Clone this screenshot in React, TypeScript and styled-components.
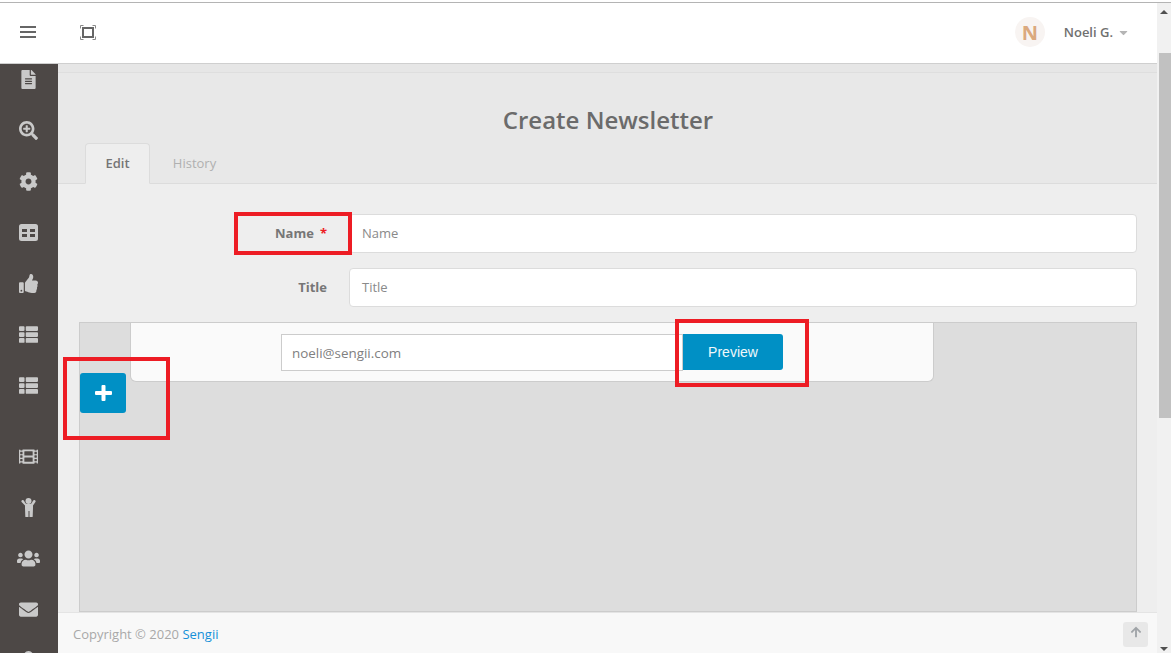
import React from "react";
import styled, { createGlobalStyle } from "styled-components";
import {
  FaFileAlt,
  FaSearchPlus,
  FaCog,
  FaThumbsUp,
  FaThList,
  FaFilm,
  FaUsers,
  FaEnvelope,
  FaArrowUp,
  FaCaretDown,
  FaUser,
} from "react-icons/fa";

const Global = createGlobalStyle`
  html, body { margin: 0; padding: 0; width: 100%; height: 100%; overflow: hidden; background: #fff; }
  * { box-sizing: border-box; }
  body { font-family: "Open Sans", "Liberation Sans", sans-serif; }
`;

const Page = styled.div`
  position: relative;
  width: 1171px;
  height: 653px;
  overflow: hidden;
  display: flex;
  flex-direction: column;
`;
const TopLine = styled.div`
  height: 3px;
  flex: none;
  background: #fff;
  border-bottom: 1px solid #b4b4b4;
`;
const Body = styled.div`
  flex: 1;
  min-height: 0;
  display: flex;
`;
const Left = styled.div`
  flex: 1;
  min-width: 0;
  display: flex;
  flex-direction: column;
`;
const Header = styled.header`
  flex: none;
  height: 61px;
  background: #fff;
  border-bottom: 1px solid #cfcfcf;
  display: flex;
  align-items: center;
  padding: 0 27px 2px 20px;
`;
const Burger = styled.div`
  width: 16px;
  display: flex;
  flex-direction: column;
  gap: 3px;
  margin-right: 44px;
  span { display: block; height: 2px; background: #666; }
`;
const Spacer = styled.div`
  flex: 1;
`;
const Avatar = styled.div`
  width: 30px;
  height: 30px;
  border-radius: 50%;
  background: #f8f4f2;
  color: #dba97e;
  font-weight: 700;
  font-size: 20px;
  display: flex;
  align-items: center;
  justify-content: center;
  margin-right: 19px;
`;
const UserName = styled.span`
  font-size: 13px;
  font-weight: 600;
  color: #707070;
  margin-right: 4px;
`;
const Caret = styled.span`
  display: flex;
  color: #b5b5b5;
  font-size: 13px;
`;
const Row = styled.div`
  flex: 1;
  min-height: 0;
  display: flex;
`;
const Sidebar = styled.nav`
  flex: none;
  width: 58px;
  background: #4d4846;
  overflow: hidden;
  display: flex;
  flex-direction: column;
`;
const SideList = styled.div`
  margin-top: -10px;
  padding-right: 2px;
  display: flex;
  flex-direction: column;
`;
const SideItem = styled.div<{ $gap?: boolean; $size?: number }>`
  flex: none;
  height: 51px;
  margin-top: ${(p) => (p.$gap ? "20px" : "0")};
  display: flex;
  align-items: center;
  justify-content: center;
  color: #c9c9c9;
  font-size: ${(p) => p.$size ?? 19}px;
`;
const MainCol = styled.div`
  flex: 1;
  min-width: 0;
  display: flex;
  flex-direction: column;
`;
const Main = styled.main`
  flex: 1;
  min-height: 0;
  overflow: hidden;
  background: #eeeeee;
  display: flex;
  flex-direction: column;
`;
const Band = styled.div`
  flex: none;
  height: 9px;
  background: #e6e6e6;
  border-bottom: 1px solid #dedede;
`;
const TitleArea = styled.div`
  flex: none;
  height: 111px;
  background: #e8e8e8;
  border-bottom: 1px solid #dcdcdc;
  display: flex;
  flex-direction: column;
  justify-content: flex-end;
`;
const Title = styled.h1`
  margin: 0 0 7px 1px;
  text-align: center;
  font-size: 24px;
  line-height: 33px;
  font-weight: 600;
  color: #6b6b6b;
`;
const Tabs = styled.div`
  display: flex;
  padding-left: 27px;
  height: 41px;
  margin-bottom: -1px;
`;
const Tab = styled.div<{ $active?: boolean }>`
  width: ${(p) => (p.$active ? "65px" : "89px")};
  height: 41px;
  padding-bottom: 2px;
  display: flex;
  align-items: center;
  justify-content: center;
  font-size: 13px;
  font-weight: ${(p) => (p.$active ? 600 : 400)};
  color: ${(p) => (p.$active ? "#757575" : "#b0b0b0")};
  background: ${(p) => (p.$active ? "#eeeeee" : "transparent")};
  border: ${(p) => (p.$active ? "1px solid #dcdcdc" : "none")};
  border-bottom: ${(p) => (p.$active ? "1px solid #eeeeee" : "none")};
  border-radius: 4px 4px 0 0;
`;
const Form = styled.div`
  flex: 1;
  min-height: 0;
  display: flex;
  flex-direction: column;
  padding: 30px 20px 0 21px;
`;
const FormRow = styled.div`
  flex: none;
  display: flex;
  align-items: center;
  height: 39px;
  margin-bottom: 15px;
`;
const Label = styled.label`
  width: 270px;
  flex: none;
  text-align: right;
  padding: 0 22px 2px 0;
  font-size: 13px;
  font-weight: 700;
  color: #767676;
`;
const Req = styled.span`
  color: #ed1c24;
  margin-left: 6px;
`;
const TextBox = styled.div`
  flex: 1;
  height: 39px;
  background: #fff;
  border: 1px solid #dcdcdc;
  border-radius: 4px;
  padding: 0 0 2px 12px;
  display: flex;
  align-items: center;
  font-size: 13px;
  color: #8a8a8a;
`;
const Editor = styled.div`
  flex: 1;
  min-height: 0;
  background: #dddddd;
  border: 1px solid #cccccc;
  display: flex;
  align-items: flex-start;
`;
const PlusButton = styled.div`
  flex: none;
  width: 46px;
  height: 40px;
  margin-top: 50px;
  background: #0090c5;
  border-radius: 3px;
  display: flex;
  align-items: center;
  justify-content: center;
`;
const ToolCard = styled.div`
  flex: none;
  width: 804px;
  height: 59px;
  margin-left: 4px;
  background: #fafafa;
  border: 1px solid #cccccc;
  border-top: none;
  border-radius: 0 0 6px 6px;
  padding: 11px 0 0 150px;
  display: flex;
  align-items: flex-start;
`;
const EmailBox = styled.div`
  width: 402px;
  height: 37px;
  background: #fff;
  border: 1px solid #cccccc;
  padding-left: 10px;
  display: flex;
  align-items: center;
  font-size: 13.4px;
  color: #808080;
`;
const PreviewButton = styled.div`
  width: 100px;
  height: 36px;
  background: #0090c5;
  border-radius: 0 3px 3px 0;
  color: #f0f8fb;
  font-family: "Liberation Sans", Arial, sans-serif;
  font-size: 14px;
  display: flex;
  align-items: center;
  justify-content: center;
`;
const Footer = styled.footer`
  flex: none;
  height: 41px;
  background: #f8f8f8;
  border-top: 1px solid #e4e4e4;
  display: flex;
  align-items: center;
  justify-content: space-between;
  padding: 2px 9px 0 15px;
  font-size: 13px;
  color: #a8a8a8;
`;
const Link = styled.a`
  color: #1590d8;
  text-decoration: none;
`;
const ToTop = styled.div`
  width: 25px;
  height: 25px;
  margin-top: 1px;
  border-radius: 3px;
  background: #e8e8e8;
  color: #a0a4a8;
  font-size: 12px;
  display: flex;
  align-items: center;
  justify-content: center;
  padding-bottom: 5px;
`;
const Scrollbar = styled.div`
  flex: none;
  width: 14px;
  background: #f1f1f1;
  display: flex;
  flex-direction: column;
  align-items: flex-end;
  position: relative;
`;
const ArrowUp = styled.div`
  width: 0;
  height: 0;
  position: absolute;
  top: 7px;
  left: 3px;
  border-left: 4px solid transparent;
  border-right: 4px solid transparent;
  border-bottom: 4px solid #505050;
`;
const ArrowDown = styled.div`
  width: 0;
  height: 0;
  position: absolute;
  bottom: 2px;
  left: 3px;
  border-left: 4px solid transparent;
  border-right: 4px solid transparent;
  border-top: 4px solid #505050;
`;
const Thumb = styled.div`
  width: 12px;
  height: 365px;
  margin-top: 50px;
  background: #c1c1c1;
`;
const Callout = styled.div<{ $x: number; $y: number; $w: number; $h: number }>`
  position: absolute;
  left: ${(p) => p.$x}px;
  top: ${(p) => p.$y}px;
  width: ${(p) => p.$w}px;
  height: ${(p) => p.$h}px;
  border: 4px solid #ed1c24;
  pointer-events: none;
`;

const FullscreenIcon = () => (
  <svg width="16" height="15" viewBox="0 0 16 15" fill="none">
    <path d="M.5 3.500V.5h3M12.500.5h3v3M15.500 11.500v3h-3M3.500 14.500h-3v-3" stroke="#8a8a8a" strokeWidth="1" />
    <rect x="3" y="3" width="10" height="9" stroke="#666" strokeWidth="2" />
  </svg>
);

const GridIcon = () => (
  <svg width="19" height="17" viewBox="0 0 19 17">
    <path
      fill="#c9c9c9"
      fillRule="evenodd"
      d="M2.5 0h14A2.5 2.5 0 0 1 19 2.500v12a2.500 2.500 0 0 1-2.500 2.500h-14A2.500 2.500 0 0 1 0 14.500v-12A2.500 2.500 0 0 1 2.500 0zM3 5v3h5V5zM11 5v3h5V5zM3 10v3h5v-3zM11 10v3h5v-3z"
    />
  </svg>
);

const PlusGlyph = () => (
  <svg width="17" height="16" viewBox="0 0 17 16">
    <path
      fill="#fff"
      d="M6.500 1a1 1 0 0 1 1-1h2a1 1 0 0 1 1 1v5h5.500a1 1 0 0 1 1 1v2a1 1 0 0 1-1 1h-5.500v5a1 1 0 0 1-1 1h-2a1 1 0 0 1-1-1v-5H1a1 1 0 0 1-1-1V7a1 1 0 0 1 1-1h5.500z"
    />
  </svg>
);

const ChildGlyph = () => (
  <svg width="15" height="19" viewBox="0 0 15 19">
    <g fill="#c9c9c9">
      <circle cx="7.500" cy="3" r="3" />
      <path d="M1 2.200c.9-.5 1.600-.2 2 .5l1.400 2.500c.8.6 1.800.9 3.100.9s2.300-.3 3.100-.9L12 2.700c.4-.7 1.100-1 2-.5.700.5.800 1.200.4 1.900l-2.400 3.400v2.500l-.3 8.600c0 .9-2.800.9-3.200.1V13h-1v5.700c-.4.800-3.200.8-3.200-.1L4 10V7.500L.6 4.100C.2 3.400.3 2.700 1 2.200z" />
    </g>
  </svg>
);

export default function App() {
  return (
    <Page>
      <Global />
      <TopLine />
      <Body>
        <Left>
          <Header>
            <Burger>
              <span />
              <span />
              <span />
            </Burger>
            <FullscreenIcon />
            <Spacer />
            <Avatar>N</Avatar>
            <UserName>Noeli G.</UserName>
            <Caret>
              <FaCaretDown />
            </Caret>
          </Header>
          <Row>
            <Sidebar>
              <SideList>
                <SideItem><FaFileAlt /></SideItem>
                <SideItem><FaSearchPlus /></SideItem>
                <SideItem><FaCog /></SideItem>
                <SideItem><GridIcon /></SideItem>
                <SideItem><FaThumbsUp /></SideItem>
                <SideItem><FaThList /></SideItem>
                <SideItem><FaThList /></SideItem>
                <SideItem $gap><FaFilm /></SideItem>
                <SideItem><ChildGlyph /></SideItem>
                <SideItem $size={23}><FaUsers /></SideItem>
                <SideItem><FaEnvelope /></SideItem>
                <SideItem><FaUser /></SideItem>
              </SideList>
            </Sidebar>
            <MainCol>
              <Main>
                <Band />
                <TitleArea>
                  <Title>Create Newsletter</Title>
                  <Tabs>
                    <Tab $active>Edit</Tab>
                    <Tab>History</Tab>
                  </Tabs>
                </TitleArea>
                <Form>
                  <FormRow>
                    <Label>
                      Name<Req>*</Req>
                    </Label>
                    <TextBox>Name</TextBox>
                  </FormRow>
                  <FormRow>
                    <Label>Title</Label>
                    <TextBox>Title</TextBox>
                  </FormRow>
                  <Editor>
                    <PlusButton>
                      <PlusGlyph />
                    </PlusButton>
                    <ToolCard>
                      <EmailBox>noeli@sengii.com</EmailBox>
                      <PreviewButton>Preview</PreviewButton>
                    </ToolCard>
                  </Editor>
                </Form>
              </Main>
              <Footer>
                <span>
                  Copyright © 2020 <Link href="#">Sengii</Link>
                </span>
                <ToTop>
                  <FaArrowUp />
                </ToTop>
              </Footer>
            </MainCol>
          </Row>
        </Left>
        <Scrollbar>
          <ArrowUp />
          <Thumb />
          <ArrowDown />
        </Scrollbar>
      </Body>
      <Callout $x={234} $y={212} $w={118} $h={43} />
      <Callout $x={675} $y={319} $w={134} $h={68} />
      <Callout $x={63} $y={357} $w={107} $h={83} />
    </Page>
  );
}
